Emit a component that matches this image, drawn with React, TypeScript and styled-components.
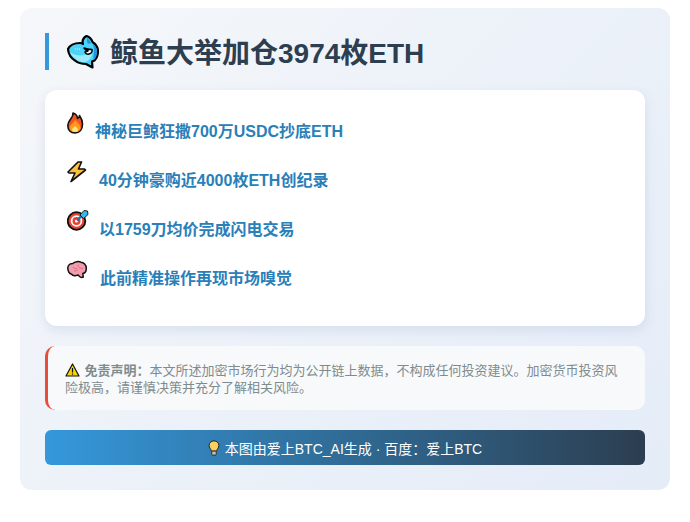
import React from "react";
import styled, { createGlobalStyle } from "styled-components";

const GlobalStyle = createGlobalStyle`
  body {
    margin: 8px 0 0;
    background: #ffffff;
    font-family: "Liberation Sans", "Noto Sans CJK SC", sans-serif;
  }
`;

const Card = styled.div`
  box-sizing: border-box;
  width: 650px;
  height: 482px;
  margin: 0 auto;
  padding: 25px;
  border-radius: 12px;
  background: linear-gradient(135deg, #f5f7fa 0%, #e4ecf8 100%);
`;

const Title = styled.h1`
  box-sizing: border-box;
  display: flex;
  align-items: center;
  height: 37px;
  margin: 0 0 20px;
  padding: 0 0 2px 18px;
  border-left: 4px solid #3498db;
  font-size: 28px;
  font-weight: 700;
  color: #2c3e50;
  svg {
    flex: none;
    width: 34px;
    height: 34px;
    margin: 2px 9px 0 0;
  }
`;

const Highlights = styled.ul`
  box-sizing: border-box;
  height: 236px;
  margin: 0 0 20px;
  padding: 20px 22px 0;
  list-style: none;
  background: #ffffff;
  border-radius: 12px;
  box-shadow: 0 4px 12px rgba(60, 90, 150, 0.12);
`;

const Item = styled.li`
  display: flex;
  height: 49px;
  font-size: 16px;
  font-weight: 700;
  color: #2980b9;
`;

const IconSlot = styled.span<{ $width: number }>`
  flex: none;
  width: ${(props) => props.$width}px;
  svg {
    display: block;
    width: 22px;
    height: 22px;
    margin-top: 2px;
  }
`;

const ItemText = styled.span`
  margin-top: 13px;
  line-height: 18px;
`;

const Disclaimer = styled.div`
  box-sizing: border-box;
  height: 64px;
  margin-bottom: 20px;
  padding: 16px 17px 0;
  border-left: 3px solid #e74c3c;
  border-radius: 10px;
  background: #f8f9fb;
  font-size: 13px;
  line-height: 17px;
  color: #7f8c8d;
  strong {
    font-weight: 700;
  }
  svg {
    width: 15px;
    height: 14px;
    margin-right: 4.5px;
    vertical-align: -2px;
  }
`;

const Footer = styled.div`
  display: flex;
  align-items: center;
  justify-content: center;
  height: 35px;
  border-radius: 6px;
  background: linear-gradient(90deg, #3498db, #2c3e50);
  font-size: 14px;
  color: #ffffff;
  svg {
    width: 12px;
    height: 16px;
    margin-right: 5px;
  }
`;

const Whale = () => (
  <svg viewBox="0 0 34 34">
    <path
      d="M1 14C3 10 8 8 13 8c1 0 2 0 3 1-1-3 0-6 3.500-8 3 1 5 3 6 6 3 2 5.500 5 5.500 9 0 4-1 7-3.500 9.500l-2.500 1 .5 6-6.500-3.500c-4 0-8-1-11-3.500C4 23 1.500 20 1 14z"
      fill="#4fd2f8"
      stroke="#000"
      strokeWidth="2.200"
      strokeLinejoin="round"
    />
    <path d="M2.500 17c4 3 10 4 15 3 3-.5 6-1.500 8-3-.5 5-3 9-8 10-3 .5-7-1-10-4-2.500-2-4-4-5-6z" fill="#9beafc" />
    <path d="M25.500 8.500c2.500 2 4.500 4.500 4.500 7.500 0 4-1 7-3 9-1-2-.5-5 0-8 .5-3-.5-6-1.500-8.500z" fill="#1f97dc" />
    <path d="M20 3c2 1 3 3 4 5l-3 1c-1-2-1.500-4-1-6z" fill="#1f97dc" />
    <path d="M17 13c2 1 5 1.500 8 1.500.5 2-.5 4-3 4.500-2 .5-3.500-.5-4-2l3-1c-1.500-.5-3-1.500-4-3z" fill="#fff" stroke="#000" strokeWidth="1.500" strokeLinejoin="round" />
    <path d="M8 14h6" stroke="#d8f6ff" strokeWidth="1" strokeDasharray="1 1" />
  </svg>
);

const Fire = () => (
  <svg viewBox="0 0 22 22">
    <path
      d="M6 1c3 1 4.500 3 4.500 5.500 1.500-.5 2-1.500 2-3 2 3 3 5.500 3 8.500 0 5.500-3 9-7.500 9S.8 18 .8 13.500c0-3 1.700-5 3.200-7C5.300 5 6 3 6 1z"
      fill="#f4531c"
      stroke="#111"
      strokeWidth="1.600"
      strokeLinejoin="round"
    />
    <path d="M8 8c2 2 5.500 4.500 5.500 8 0 2.500-2.500 4-5.500 4s-5.500-1.500-5.500-4c0-3 4-4.500 5.500-8z" fill="#fb9a1e" />
    <path d="M8 14c1 1 3 2 3 4 0 1-1 2-3 2s-3-1-3-2c0-2 2-2.500 3-4z" fill="#ffe27a" />
  </svg>
);

const Bolt = () => (
  <svg viewBox="0 0 22 22">
    <path
      d="M11 1L1 11l1 1 6 0-4 8.500L18.500 9l-1-1-6 0 3-7z"
      fill="#fbbf3c"
      stroke="#111"
      strokeWidth="1.600"
      strokeLinejoin="round"
    />
  </svg>
);

const Target = () => (
  <svg viewBox="0 0 22 22">
    <circle cx="9.500" cy="11" r="8.800" fill="#e8402c" stroke="#111" strokeWidth="1.800" />
    <circle cx="9.500" cy="11" r="5.800" fill="#fff" />
    <circle cx="9.500" cy="11" r="4" fill="#e8402c" />
    <circle cx="9.500" cy="11" r="1.600" fill="#fff" />
    <path d="M10 10.500l6-6" stroke="#1d6fb0" strokeWidth="2.400" />
    <path d="M13 5l4-4.500 3.500.5.500 3.500-4.500 4z" fill="#35b8ee" stroke="#111" strokeWidth="0.900" strokeLinejoin="round" />
  </svg>
);

const Brain = () => (
  <svg viewBox="0 0 22 22">
    <path
      d="M.8 9c0-3 2.700-4.500 5-4.500 2-2 6-2.500 8-1.300 3 0 5.500 3 5.500 6 0 3-1.500 5-3.500 5.300l.5 3.500c-2 1-4 0-5-2-3 1-6 .5-7-1-2 0-3.500-3-3.500-6z"
      fill="#f29dad"
      stroke="#111"
      strokeWidth="1.500"
      strokeLinejoin="round"
    />
    <path d="M6 8c1 2 3 2 4 1M11 5.500c0 3 2 4 5 4M7 12c2 0 3-1 4-1" fill="none" stroke="#dc6f86" strokeWidth="1" />
  </svg>
);

const Warning = () => (
  <svg viewBox="0 0 15 14">
    <path d="M7.500 1L14 13H1z" fill="#f7d600" stroke="#111" strokeWidth="1.200" strokeLinejoin="round" />
    <path d="M7.500 5v4.500M7.500 10.500v1.300" stroke="#111" strokeWidth="1.200" />
  </svg>
);

const Bulb = () => (
  <svg viewBox="0 0 13 18">
    <path
      d="M6.500 1C3.200 1 1 3.400 1 6.200c0 2.600 2 3.800 2.600 6.300h5.800C10 10 12 8.800 12 6.200 12 3.400 9.800 1 6.500 1z"
      fill="#fccf5f"
      stroke="#222"
      strokeWidth="1.100"
    />
    <rect x="4" y="12.500" width="5" height="4.500" rx="1" fill="#bcc3c9" stroke="#222" strokeWidth="1" />
  </svg>
);

const items = [
  { icon: <Fire />, width: 28, text: "神秘巨鲸狂撒700万USDC抄底ETH" },
  { icon: <Bolt />, width: 32, text: "40分钟豪购近4000枚ETH创纪录" },
  { icon: <Target />, width: 32, text: "以1759刀均价完成闪电交易" },
  { icon: <Brain />, width: 33, text: "此前精准操作再现市场嗅觉" },
];

export default function App() {
  return (
    <>
      <GlobalStyle />
      <Card>
        <Title>
          <Whale />
          鲸鱼大举加仓3974枚ETH
        </Title>
        <Highlights>
          {items.map((item) => (
            <Item key={item.text}>
              <IconSlot $width={item.width}>{item.icon}</IconSlot>
              <ItemText>{item.text}</ItemText>
            </Item>
          ))}
        </Highlights>
        <Disclaimer>
          <Warning />
          <strong>免责声明：</strong>
          本文所述加密市场行为均为公开链上数据，不构成任何投资建议。加密货币投资风险极高，请谨慎决策并充分了解相关风险。
        </Disclaimer>
        <Footer>
          <Bulb />
          本图由爱上BTC_AI生成 · 百度：爱上BTC
        </Footer>
      </Card>
    </>
  );
}
